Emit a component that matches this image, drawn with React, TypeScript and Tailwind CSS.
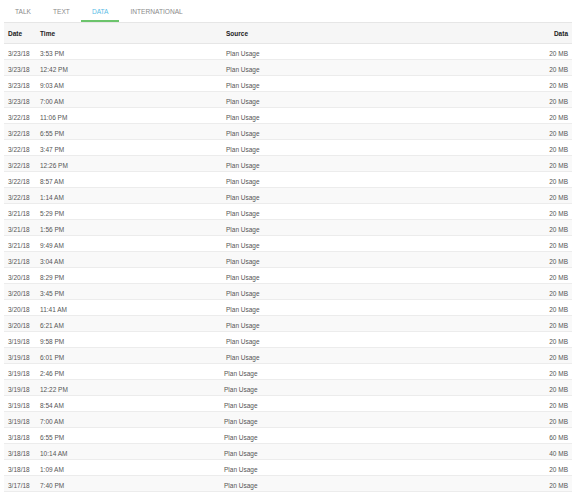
import React, { useState } from 'react';

type UsageRow = { date: string; time: string; source: string; data: string };

const ROWS: UsageRow[] = [
  { date: '3/23/18', time: '3:53 PM', source: 'Plan Usage', data: '20 MB' },
  { date: '3/23/18', time: '12:42 PM', source: 'Plan Usage', data: '20 MB' },
  { date: '3/23/18', time: '9:03 AM', source: 'Plan Usage', data: '20 MB' },
  { date: '3/23/18', time: '7:00 AM', source: 'Plan Usage', data: '20 MB' },
  { date: '3/22/18', time: '11:06 PM', source: 'Plan Usage', data: '20 MB' },
  { date: '3/22/18', time: '6:55 PM', source: 'Plan Usage', data: '20 MB' },
  { date: '3/22/18', time: '3:47 PM', source: 'Plan Usage', data: '20 MB' },
  { date: '3/22/18', time: '12:26 PM', source: 'Plan Usage', data: '20 MB' },
  { date: '3/22/18', time: '8:57 AM', source: 'Plan Usage', data: '20 MB' },
  { date: '3/22/18', time: '1:14 AM', source: 'Plan Usage', data: '20 MB' },
  { date: '3/21/18', time: '5:29 PM', source: 'Plan Usage', data: '20 MB' },
  { date: '3/21/18', time: '1:56 PM', source: 'Plan Usage', data: '20 MB' },
  { date: '3/21/18', time: '9:49 AM', source: 'Plan Usage', data: '20 MB' },
  { date: '3/21/18', time: '3:04 AM', source: 'Plan Usage', data: '20 MB' },
  { date: '3/20/18', time: '8:29 PM', source: 'Plan Usage', data: '20 MB' },
  { date: '3/20/18', time: '3:45 PM', source: 'Plan Usage', data: '20 MB' },
  { date: '3/20/18', time: '11:41 AM', source: 'Plan Usage', data: '20 MB' },
  { date: '3/20/18', time: '6:21 AM', source: 'Plan Usage', data: '20 MB' },
  { date: '3/19/18', time: '9:58 PM', source: 'Plan Usage', data: '20 MB' },
  { date: '3/19/18', time: '6:01 PM', source: 'Plan Usage', data: '20 MB' },
  { date: '3/19/18', time: '2:46 PM', source: 'Plan Usage', data: '20 MB' },
  { date: '3/19/18', time: '12:22 PM', source: 'Plan Usage', data: '20 MB' },
  { date: '3/19/18', time: '8:54 AM', source: 'Plan Usage', data: '20 MB' },
  { date: '3/19/18', time: '7:00 AM', source: 'Plan Usage', data: '20 MB' },
  { date: '3/18/18', time: '6:55 PM', source: 'Plan Usage', data: '60 MB' },
  { date: '3/18/18', time: '10:14 AM', source: 'Plan Usage', data: '40 MB' },
  { date: '3/18/18', time: '1:09 AM', source: 'Plan Usage', data: '20 MB' },
  { date: '3/17/18', time: '7:40 PM', source: 'Plan Usage', data: '20 MB' },
];

const TABS = ['TALK', 'TEXT', 'DATA', 'INTERNATIONAL'];

const App: React.FC = () => {
  const [activeTab, setActiveTab] = useState('DATA');

  return (
    <div className="min-h-screen bg-white px-1 font-['Liberation_Sans',Arial,sans-serif]">
      {/* tabs */}
      <div className="flex h-[22px]">
        {TABS.map(tab => (
          <button
            key={tab}
            onClick={() => setActiveTab(tab)}
            className={`px-[11px] pt-[4px] h-full text-[6.6px] leading-none border-b-2 ${
              activeTab === tab ? 'text-[#5bbde6] border-[#6cc46c]' : 'text-[#8a8a8a] border-transparent'
            }`}
          >
            {tab}
          </button>
        ))}
      </div>

      {/* usage table */}
      <div className="w-[568px] text-[6.5px] leading-none">
        <div className="grid grid-cols-[36px_186px_1fr_auto] items-center h-[22px] pt-[2px] bg-[#f6f6f6] border-t border-b border-[#e6e6e6] font-bold text-[#222]">
          <div className="pl-1">Date</div>
          <div>Time</div>
          <div>Source</div>
          <div className="pr-1 text-right">Data</div>
        </div>
        {ROWS.map((row, i) => (
          <div
            key={i}
            className={`grid items-center h-[16px] pt-[5px] border-b border-[#ececec] text-[#555] ${
              i >= 20 ? 'grid-cols-[36px_184px_1fr_auto]' : 'grid-cols-[36px_186px_1fr_auto]'
            } ${i % 2 === 1 ? 'bg-[#f9f9f9]' : 'bg-white'}`}
          >
            <div className="pl-1">{row.date}</div>
            <div>{row.time}</div>
            <div>{row.source}</div>
            <div className="pr-1 text-right">{row.data}</div>
          </div>
        ))}
      </div>
    </div>
  );
};

export default App;
